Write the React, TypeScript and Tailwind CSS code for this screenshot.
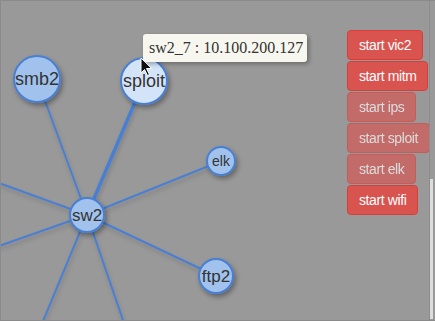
const nodes = [
  { id: 'smb2', x: 36, y: 78, r: 23, size: 18, hover: false },
  { id: 'sploit', x: 143, y: 80, r: 23, size: 18, hover: true },
  { id: 'elk', x: 220, y: 160, r: 14, size: 14, hover: false },
  { id: 'sw2', x: 86, y: 214, r: 17, size: 17, hover: false },
  { id: 'ftp2', x: 215, y: 275, r: 17, size: 17, hover: false },
];

// edges from sw2 (some go off canvas)
const edges = [
  { x: 36, y: 78, w: 2 },
  { x: 143, y: 80, w: 3.5 },
  { x: 220, y: 160, w: 2 },
  { x: 215, y: 275, w: 2 },
  { x: -2, y: 182, w: 2 },
  { x: -2, y: 245, w: 2 },
  { x: 40, y: 325, w: 2 },
  { x: 124, y: 325, w: 2 },
];

const buttons = [
  { label: 'start vic2', on: true },
  { label: 'start mitm', on: true },
  { label: 'start ips', on: false },
  { label: 'start sploit', on: false },
  { label: 'start elk', on: false },
  { label: 'start wifi', on: true },
];

function Graph() {
  const sw = nodes[3];
  return (
    <svg className="absolute inset-0" width={435} height={321}>
      <defs>
        <filter id="shadow" x="-50%" y="-50%" width="200%" height="200%">
          <feDropShadow dx="2" dy="3" stdDeviation="2.5" floodColor="#000" floodOpacity="0.35" />
        </filter>
        <filter id="lineShadow" x="-20%" y="-20%" width="140%" height="140%">
          <feDropShadow dx="1" dy="3" stdDeviation="2" floodColor="#000" floodOpacity="0.18" />
        </filter>
      </defs>
      <g filter="url(#lineShadow)">
        {edges.map((e, i) => (
          <line key={i} x1={sw.x} y1={sw.y} x2={e.x} y2={e.y} stroke="#4a7fd3" strokeWidth={e.w} />
        ))}
      </g>
      {nodes.map((n) => (
        <g key={n.id}>
          <circle
            cx={n.x}
            cy={n.y}
            r={n.r}
            fill={n.hover ? '#d3e4f8' : '#a0c2ec'}
            stroke="#4a7fd3"
            strokeWidth={2}
            filter="url(#shadow)"
          />
          <text
            x={n.x}
            y={n.y + n.size * 0.36}
            textAnchor="middle"
            fontSize={n.size}
            fill="#333"
            fontFamily="'Liberation Sans', Arial, sans-serif"
          >
            {n.id}
          </text>
        </g>
      ))}
      {/* mouse cursor */}
      <path
        d="M140 57 L140 72 L143.5 68.5 L146.5 74.5 L148.5 73.5 L145.5 67.5 L150.5 67.5 Z"
        fill="#111"
        stroke="#fff"
        strokeWidth={1}
        strokeLinejoin="round"
      />
    </svg>
  );
}

export default function App() {
  return (
    <div className="relative w-[435px] h-[321px] overflow-hidden bg-[#999999] border-t border-l border-b border-[#8a8a8a] font-['Liberation_Sans',Arial,sans-serif]">
      <Graph />

      <div className="absolute left-[142px] top-[33px] w-[164px] h-[28px] rounded-[3px] bg-[#f7f7ef] shadow-[2px_2px_4px_rgba(0,0,0,0.3)] flex items-center pl-[6px] text-[16px] text-[#333] whitespace-nowrap font-['Liberation_Serif',Georgia,serif]">
        sw2_7 : 10.100.200.127
      </div>

      <div className="absolute left-[346px] top-[29px] flex flex-col items-start gap-px">
        {buttons.map((b) => (
          <button
            key={b.label}
            className={`h-[30px] px-[11px] rounded-[4px] border border-[#d43f3a] bg-[#d9534f] text-white text-[14px] tracking-[-0.4px] leading-none whitespace-nowrap ${b.on ? '' : 'opacity-65'}`}
          >
            {b.label}
          </button>
        ))}
      </div>

      <div className="absolute top-0 bottom-0 right-[2px] w-[4px] border-l border-[#8c8c8c]">
        <div className="mt-[178px] h-[140px] bg-[#dcdcdc]" />
      </div>
    </div>
  );
}
